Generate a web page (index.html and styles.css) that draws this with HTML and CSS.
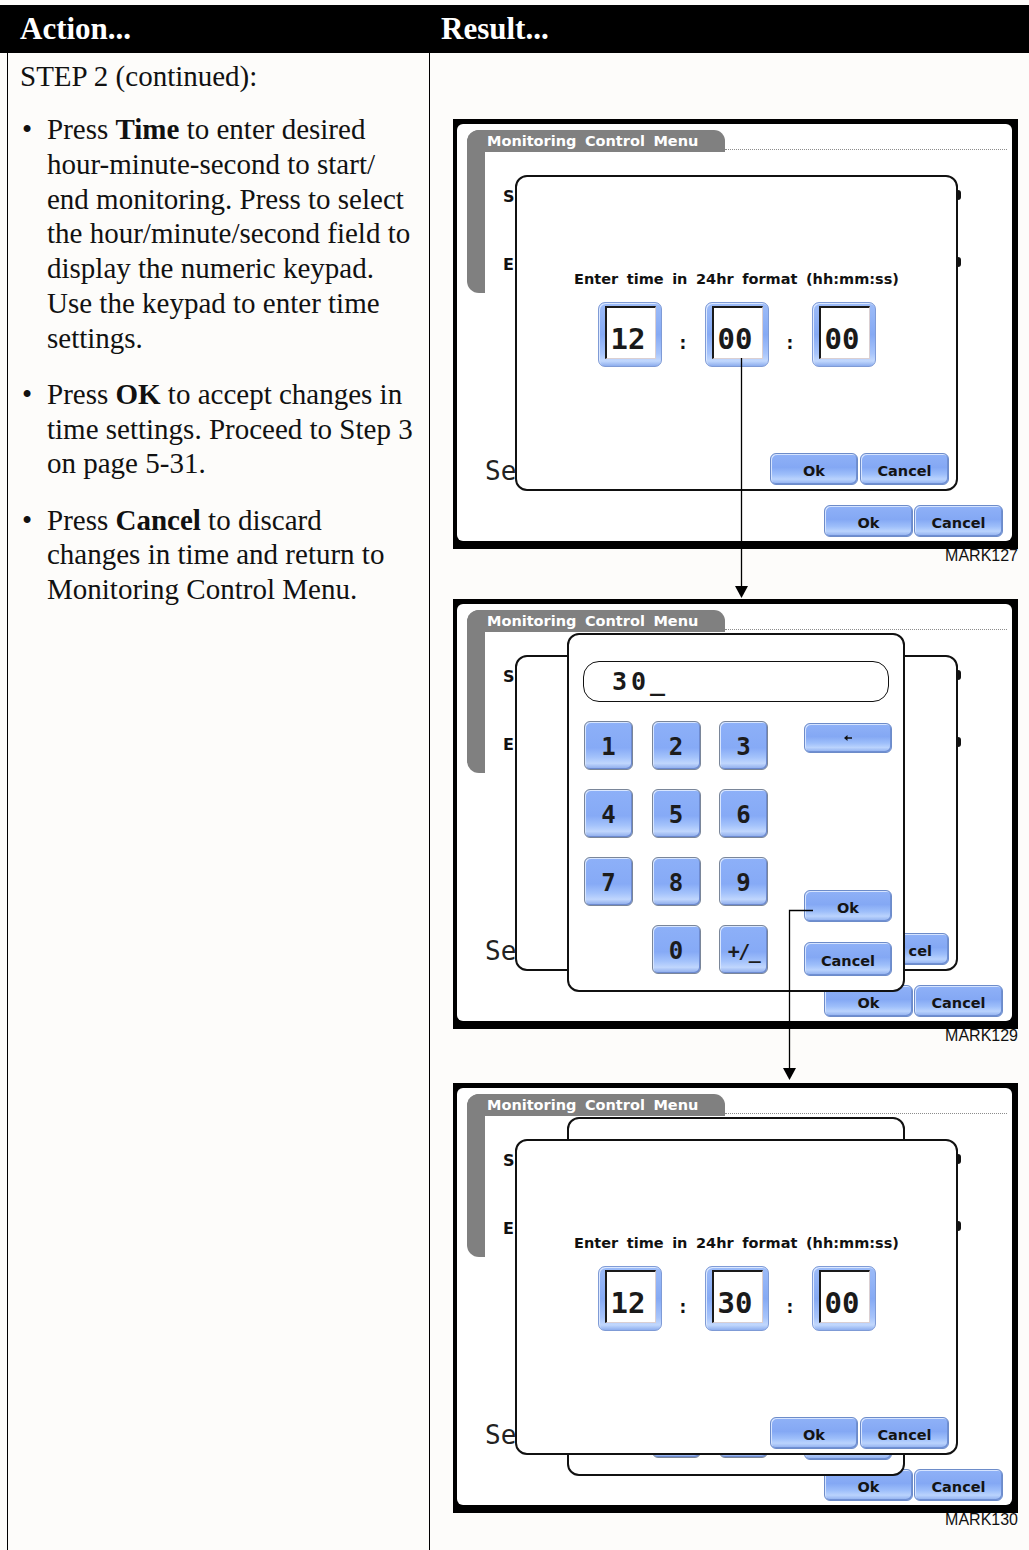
FILE: index.html
```html
<!DOCTYPE html>
<html lang="en">
<head>
<meta charset="utf-8">
<title>Monitoring Control Menu - time entry</title>
<link rel="stylesheet" href="styles.css">
</head>
<body>
<div class="page">
  <header class="head">
    <div class="h-action">Action...</div>
    <div class="h-result">Result...</div>
  </header>
  <main class="cols">
    <section class="action">
      <p class="step">STEP 2 (continued):</p>
      <ul class="bullets">
        <li><span>Press <b>Time</b> to enter desired<br>hour-minute-second to start/<br>end monitoring. Press to select<br>the hour/minute/second field to<br>display the numeric keypad.<br>Use the keypad to enter time<br>settings.</span></li>
        <li><span>Press <b>OK</b> to accept changes in<br>time settings. Proceed to Step 3<br>on page 5-31.</span></li>
        <li><span>Press <b>Cancel</b> to discard<br>changes in time and return to<br>Monitoring Control Menu.</span></li>
      </ul>
    </section>
    <section class="result">
      <!-- Screen 1 -->
      <figure class="shot">
        <div class="screen"><div class="inner ui">
          <div class="rail"></div>
          <div class="tab">Monitoring Control Menu</div>
          <div class="dots"></div>
          <div class="lbl lbl-start">S</div>
          <div class="lbl lbl-end">E</div>
          <div class="lbl-se">Se</div>
          <div class="bump b1"></div><div class="bump b2"></div>
          <div class="base-btns"><div class="btn w89">Ok</div><div class="btn w89">Cancel</div></div>
          <div class="dlg-time">
            <p class="dt-title">Enter time in 24hr format (hh:mm:ss)</p>
            <div class="tfields">
              <div class="tfield"><div class="tbox">12</div></div>
              <span class="colon">:</span>
              <div class="tfield"><div class="tbox">00</div></div>
              <span class="colon">:</span>
              <div class="tfield"><div class="tbox">00</div></div>
            </div>
            <div class="dt-btns"><div class="btn w88">Ok</div><div class="btn w89">Cancel</div></div>
          </div>
        </div></div>
        <figcaption>MARK127</figcaption>
      </figure>
      <!-- Screen 2 -->
      <figure class="shot">
        <div class="screen"><div class="inner ui">
          <div class="rail"></div>
          <div class="tab">Monitoring Control Menu</div>
          <div class="dots"></div>
          <div class="lbl lbl-start">S</div>
          <div class="lbl lbl-end">E</div>
          <div class="lbl-se">Se</div>
          <div class="bump b1"></div><div class="bump b2"></div>
          <div class="base-btns"><div class="btn w89">Ok</div><div class="btn w89">Cancel</div></div>
          <div class="dlg-time">
            <div class="dt-btns"><div class="btn w88"></div><div class="btn w89 cel">cel</div></div>
          </div>
          <div class="dlg-pad">
            <div class="pad-input">30_</div>
            <div class="pad-body">
              <div class="keys">
                <div class="key">1</div><div class="key">2</div><div class="key">3</div>
                <div class="key">4</div><div class="key">5</div><div class="key">6</div>
                <div class="key">7</div><div class="key">8</div><div class="key">9</div>
                <div class="key k0">0</div><div class="key kpm">+/_</div>
              </div>
              <div class="pad-side">
                <div class="btn bksp"><svg width="9" height="6" viewBox="0 0 9 6"><path d="M0 3L3.5 0V2.2H8V3.8H3.5V6Z" fill="#111"/></svg></div>
                <div class="btn pad-ok">Ok</div>
                <div class="btn pad-cancel">Cancel</div>
              </div>
            </div>
          </div>
        </div></div>
        <figcaption>MARK129</figcaption>
      </figure>
      <!-- Screen 3 -->
      <figure class="shot third">
        <div class="screen"><div class="inner ui">
          <div class="rail"></div>
          <div class="tab">Monitoring Control Menu</div>
          <div class="dots"></div>
          <div class="lbl lbl-start">S</div>
          <div class="lbl lbl-end">E</div>
          <div class="lbl-se">Se</div>
          <div class="bump b1"></div><div class="bump b2"></div>
          <div class="base-btns"><div class="btn w89">Ok</div><div class="btn w89">Cancel</div></div>
          <div class="dlg-pad">
            <div class="pad-input"></div>
            <div class="pad-body">
              <div class="keys">
                <div class="key"></div><div class="key"></div><div class="key"></div>
                <div class="key"></div><div class="key"></div><div class="key"></div>
                <div class="key"></div><div class="key"></div><div class="key"></div>
                <div class="key k0"></div><div class="key kpm"></div>
              </div>
              <div class="pad-side">
                <div class="btn bksp"></div>
                <div class="btn pad-ok"></div>
                <div class="btn pad-cancel"></div>
              </div>
            </div>
          </div>
          <div class="dlg-time">
            <p class="dt-title">Enter time in 24hr format (hh:mm:ss)</p>
            <div class="tfields">
              <div class="tfield"><div class="tbox">12</div></div>
              <span class="colon">:</span>
              <div class="tfield"><div class="tbox">30</div></div>
              <span class="colon">:</span>
              <div class="tfield"><div class="tbox">00</div></div>
            </div>
            <div class="dt-btns"><div class="btn w88">Ok</div><div class="btn w89">Cancel</div></div>
          </div>
        </div></div>
        <figcaption>MARK130</figcaption>
      </figure>
    </section>
  </main>
  <svg class="connectors" width="1029" height="1550" viewBox="0 0 1029 1550">
    <line x1="741.5" y1="358" x2="741.5" y2="587" stroke="#000" stroke-width="1.3"/>
    <polygon points="735,586 748,586 741.5,598" fill="#000"/>
    <polyline points="813,910.5 789.5,910.5 789.5,1069" fill="none" stroke="#000" stroke-width="1.3"/>
    <polygon points="783,1068 796,1068 789.5,1080" fill="#000"/>
  </svg>
</div>
</body>
</html>
```

FILE: styles.css
```css
* { box-sizing: border-box; }
html, body { margin: 0; padding: 0; background: #fdfcfa; }
body { font-family: "Liberation Serif", "Times New Roman", serif; color: #111; }

.page { position: relative; width: 1029px; min-height: 1550px; padding-top: 5px; overflow: hidden; }

/* header bar */
.head { display: flex; align-items: center; height: 48px; background: #000; color: #fff; font-weight: 700; font-size: 31px; }
.h-action { width: 429px; padding-left: 20px; }
.h-result { padding-left: 12px; }

/* two columns */
.cols { display: flex; min-height: 1497px; }
.action { width: 423px; margin-left: 7px; border-left: 1px solid #000; border-right: 1px solid #000; padding: 6px 0 0 12px; font-size: 29px; line-height: 34.7px; }
.step { margin: 0; }
.bullets { list-style: none; margin: 18.6px 0 0; padding: 0; }
.bullets li { display: grid; grid-template-columns: 27px auto; white-space: nowrap; }
.bullets li + li { margin-top: 21.6px; }
.bullets li::before { content: "\2022"; padding-left: 2px; }

.result { flex: 1; padding: 66px 0 0 23px; }
.shot { margin: 0; width: 565px; }
.shot + .shot { margin-top: 36px; }
.shot.third { margin-top: 40px; }
figcaption { text-align: right; font: 16px/14px "Liberation Sans", Arial, sans-serif; color: #111; }

/* device screen */
.ui { font-family: "DejaVu Sans", sans-serif; font-weight: 700; font-size: 14.5px; word-spacing: 3.5px; color: #111; }
.screen { width: 565px; height: 430px; background: #000; padding: 5px 6px 8px 4px; }
.inner { position: relative; width: 100%; height: 100%; background: #fff; border-radius: 6px; overflow: hidden; }

.rail, .tab, .dots, .lbl, .lbl-se, .bump, .base-btns, .dlg-time, .dlg-pad { position: absolute; }
.rail { left: 10px; top: 6px; width: 18px; height: 163px; background: #808080; border-radius: 12px 0 0 12px; }
.tab { left: 10px; top: 6px; width: 258px; height: 22px; background: #808080; border-radius: 12px 11px 0 0; color: #fff; padding-left: 20px; line-height: 22px; white-space: nowrap; }
.dots { left: 268px; top: 25px; width: 282px; border-top: 1px dotted #8c8c8c; }
.lbl { left: 46px; line-height: 16px; font-size: 16px; }
.lbl-start { top: 65px; }
.lbl-end { top: 133px; }
.lbl-se { left: 28px; top: 334px; font: 400 26px/26px "DejaVu Sans Mono", monospace; color: #222; }
.bump { left: 499px; width: 5px; height: 10px; background: #111; border-radius: 0 3px 3px 0; }
.b1 { top: 66px; }
.b2 { top: 133px; }
.base-btns { right: 9px; bottom: 4px; display: flex; gap: 1px; }

/* buttons */
.btn { display: flex; align-items: center; justify-content: center; height: 32px; padding-top: 3px; border: 1px solid #6d8cc9; border-radius: 6px;
  background: linear-gradient(180deg, #8fb1f7 0%, #84a8f4 45%, #9dbefa 68%, #bad3fd 84%, #8eaeee 100%);
  box-shadow: inset 1px 1px 0 #d6e4ff, inset -1px -1px 0 #6f8fd3; color: #141414; white-space: nowrap; }
.w88 { width: 88px; }
.w89 { width: 89px; }
.cel { justify-content: flex-end; padding-right: 16px; }

/* time dialog */
.dlg-time { left: 58px; top: 51px; width: 443px; height: 316px; background: #fff; border: 2px solid #111; border-radius: 12px;
  display: flex; flex-direction: column; align-items: center; padding-top: 94px; }
.dt-title { margin: 0; line-height: 16px; white-space: nowrap; }
.tfields { display: flex; margin-top: 15px; }
.tfield { width: 64px; height: 65px; border: 1px solid #7f9bd6; border-radius: 7px; padding: 3px 5px 7px 6px;
  background: linear-gradient(180deg, #9dbcf8 0%, #86aaf4 50%, #a7c4fb 80%, #c2d8fd 92%, #8eaeee 100%);
  box-shadow: inset 1px 1px 0 #dce8ff; }
.tbox { height: 100%; background: #fff; border-top: 2px solid #1a1a1a; border-left: 2px solid #1a1a1a; border-right: 1px solid #dacfd2; border-bottom: 1px solid #dacfd2;
  padding: 12px 0 0 4px; font: 700 29px/38px "DejaVu Sans Mono", monospace; color: #1a1a1a; word-spacing: 0; }
.colon { width: 43px; text-align: center; font-size: 17px; line-height: 20px; margin-top: 31px; }
.dt-btns { display: flex; gap: 2px; margin-top: auto; align-self: flex-end; margin-right: 7px; margin-bottom: 4px; }

/* keypad dialog */
.dlg-pad { left: 110px; top: 29px; width: 338px; height: 359px; background: #fff; border: 2px solid #111; border-radius: 12px; padding: 26px 0 0 14px; }
.pad-input { width: 306px; height: 41px; border: 1.5px solid #111; border-radius: 16px; padding: 2px 0 0 28px;
  font: 700 25px/36px "DejaVu Sans Mono", monospace; letter-spacing: 4px; color: #1a1a1a; }
.pad-body { display: flex; margin-top: 19px; padding-left: 1px; }
.keys { display: grid; grid-template-columns: repeat(3, 49px); grid-auto-rows: 49px; column-gap: 18.5px; row-gap: 19px; }
.key { display: flex; align-items: center; justify-content: center; padding-top: 2px; border: 1px solid #7a8699; border-radius: 6px;
  background: linear-gradient(180deg, #8db0f8 0%, #86aaf6 55%, #a2c1fb 74%, #c0d6fd 88%, #8aa9ea 100%);
  box-shadow: inset 1px 1px 0 #d8e6ff, inset -1px -1px 0 #6d8ad0; font: 700 24px "DejaVu Sans Mono", monospace; color: #1c1c1c; }
.k0 { grid-column: 2; }
.kpm { font-size: 20px; letter-spacing: -1.5px; }
.pad-side { display: flex; flex-direction: column; width: 88px; margin-left: 36px; padding-top: 2px; }
.bksp { height: 30px; padding-top: 0; }
.pad-ok { height: 32px; margin-top: 137px; }
.pad-cancel { height: 34px; margin-top: 20px; }

/* connector arrows */
.connectors { position: absolute; left: 0; top: 0; pointer-events: none; }
```
